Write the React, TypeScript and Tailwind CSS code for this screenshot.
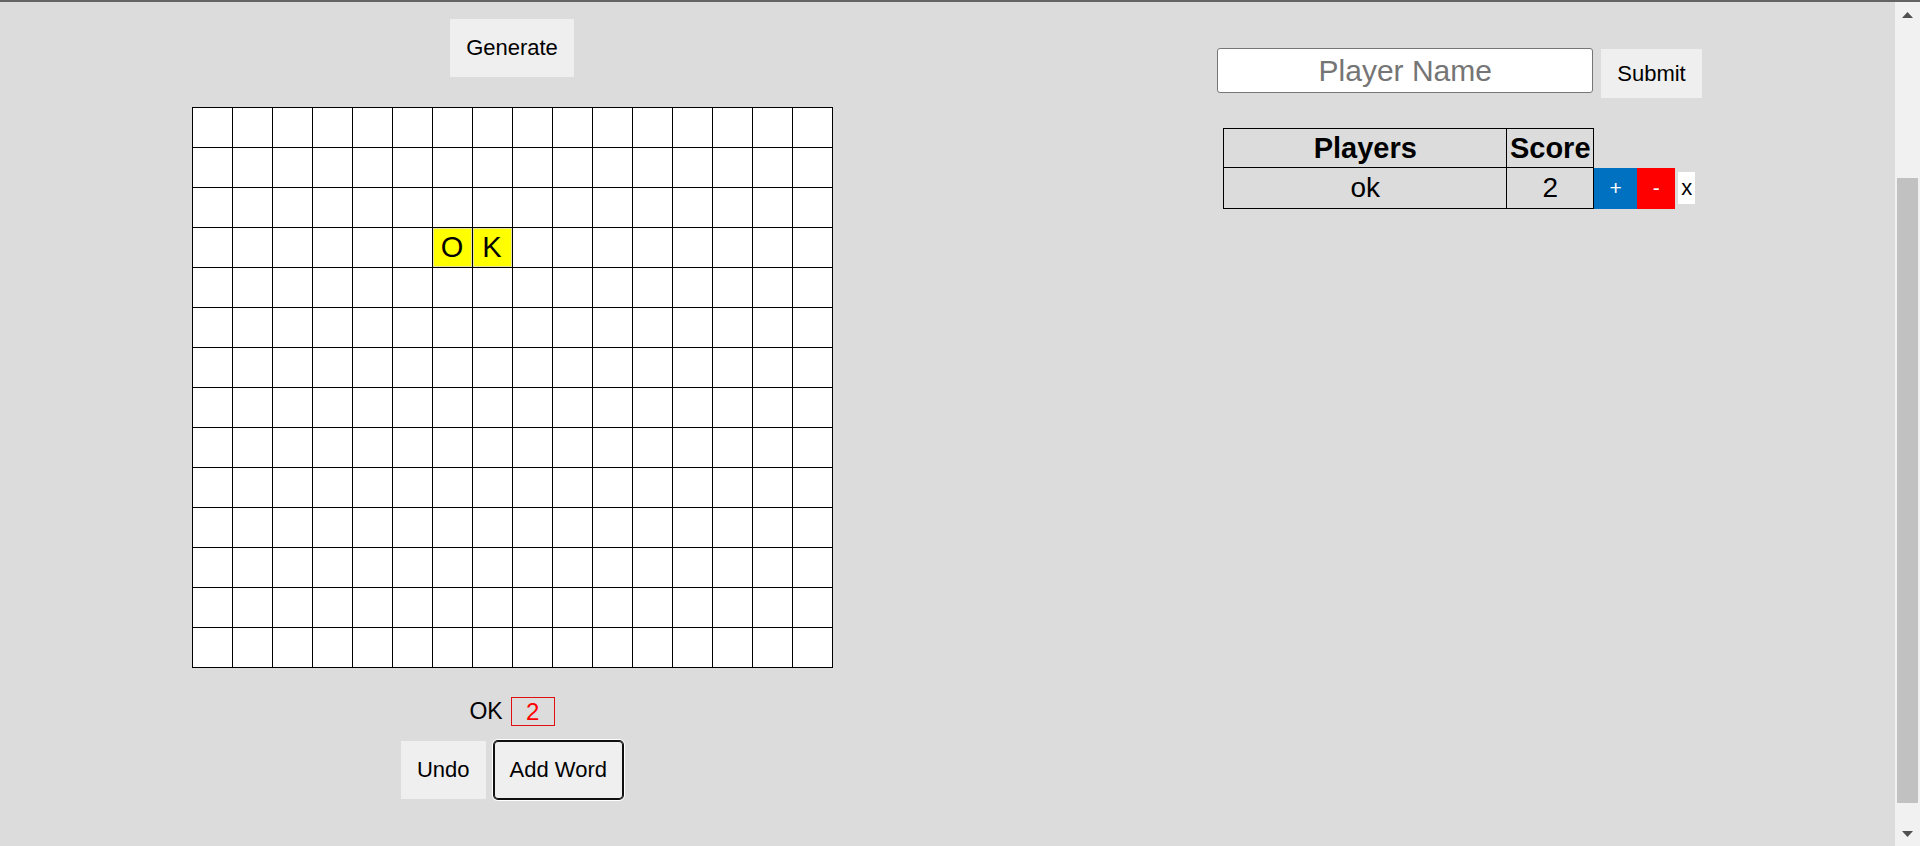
import { useState } from 'react'

const COLS = 16
const ROWS = 14

const letters: Record<string, string> = {
  '3-6': 'O',
  '3-7': 'K',
}

export default function App() {
  const [name, setName] = useState('')

  return (
    <div className="h-screen overflow-hidden flex flex-col bg-[#dcdcdc] font-['Liberation_Sans',Arial,sans-serif] text-black">
      <div className="h-[2px] bg-[#646464] shrink-0" />
      <div className="flex flex-1 min-h-0">
        {/* board */}
        <div className="w-[1024px] flex flex-col items-center pt-[17px]">
          <button className="bg-[#efefef] px-[16px] py-[15px] text-[22px] leading-[28px]">Generate</button>

          <div className="mt-[30px] grid grid-cols-[repeat(16,40px)] border-l border-t border-black">
            {Array.from({ length: ROWS * COLS }).map((_, i) => {
              const r = Math.floor(i / COLS)
              const c = i % COLS
              const ch = letters[`${r}-${c}`]
              return (
                <div key={i} className="h-[40px] border-r border-b border-black bg-white">
                  {ch ? (
                    <div className="h-full w-full bg-[#ffff00] flex items-center justify-center text-[29px] leading-none border border-[#e6e6a0]">{ch}</div>
                  ) : null}
                </div>
              )
            })}
          </div>

          <div className="mt-[29px] flex items-center gap-[8px]">
            <span className="text-[23px] leading-[29px]">OK</span>
            <span className="w-[44px] h-[29px] border border-[#e01010] text-[#ff0000] text-[24px] leading-[27px] text-center">2</span>
          </div>

          <div className="mt-[15px] flex items-center gap-[8px]">
            <button className="bg-[#efefef] px-[16px] py-[15px] text-[22px] leading-[28px]">Undo</button>
            <button className="bg-[#efefef] px-[16px] py-[15px] text-[22px] leading-[28px] rounded-[4px] shadow-[inset_0_0_0_1px_#101010,0_0_0_1px_#101010,0_0_0_2px_#ffffff]">Add Word</button>
          </div>
        </div>

        {/* players */}
        <div className="flex-1 flex flex-col items-center pt-[46px]">
          <div className="flex items-start gap-[8px]">
            <input
              value={name}
              onChange={e => setName(e.target.value)}
              placeholder="Player Name"
              className="w-[376px] h-[45px] bg-white border border-[#767676] rounded-[3px] text-center text-[30px] placeholder:text-[#757575] outline-none"
            />
            <button className="mt-[1px] h-[49px] bg-[#efefef] px-[16px] text-[22px]">Submit</button>
          </div>

          <table className="mt-[30px] border-collapse">
            <thead>
              <tr>
                <th className="border border-black w-[283px] h-[39px] p-0 text-[29px] font-bold leading-[37px]">Players</th>
                <th className="border border-black w-[87px] h-[39px] p-0 text-[29px] font-bold leading-[37px]">Score</th>
                <th className="p-0 w-[102px]" />
              </tr>
            </thead>
            <tbody>
              <tr>
                <td className="border border-black h-[40px] p-0 text-center text-[28px] leading-[38px]">ok</td>
                <td className="border border-black h-[40px] p-0 text-center text-[28px] leading-[38px]">2</td>
                <td className="p-0">
                  <div className="flex items-center">
                    <button className="w-[43px] h-[41px] bg-[#0070c0] text-white text-[21px]">+</button>
                    <button className="w-[38px] h-[41px] bg-[#ff0000] text-white text-[21px]">-</button>
                    <button className="ml-[3px] w-[17px] h-[32px] bg-white text-[22px] leading-none">x</button>
                  </div>
                </td>
              </tr>
            </tbody>
          </table>
        </div>

        {/* scrollbar */}
        <div className="w-[25px] shrink-0 bg-[#f1f1f1] flex flex-col">
          <div className="h-[25px] flex items-center justify-center">
            <svg width="11" height="6" viewBox="0 0 11 6"><polygon points="0,6 5.5,0 11,6" fill="#505050" /></svg>
          </div>
          <div className="h-[151px]" />
          <div className="mx-[2px] h-[625px] bg-[#c1c1c1]" />
          <div className="flex-1" />
          <div className="h-[25px] flex items-center justify-center">
            <svg width="11" height="6" viewBox="0 0 11 6"><polygon points="0,0 11,0 5.5,6" fill="#505050" /></svg>
          </div>
        </div>
      </div>
    </div>
  )
}
